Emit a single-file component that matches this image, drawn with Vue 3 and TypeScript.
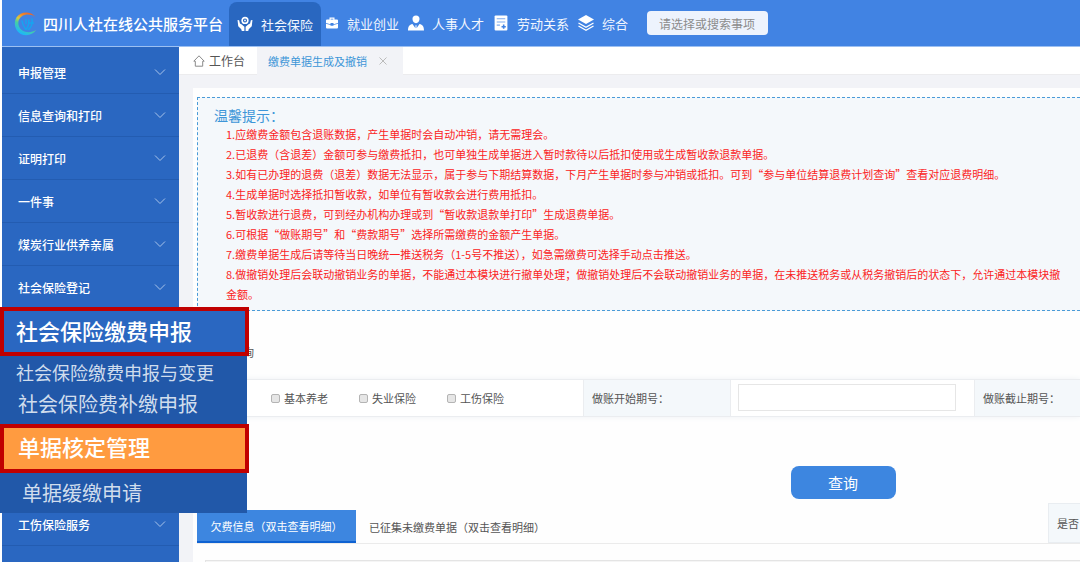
<script setup lang="ts">
import { ref } from 'vue'

interface NavItem {
  label: string
  icon: string
}

const navItems: NavItem[] = [
  { label: '社会保险', icon: 'hands' },
  { label: '就业创业', icon: 'case' },
  { label: '人事人才', icon: 'person' },
  { label: '劳动关系', icon: 'doc' },
  { label: '综合', icon: 'layers' },
]
const activeNav = ref('社会保险')

const menuTop: string[] = ['申报管理', '信息查询和打印', '证明打印', '一件事', '煤炭行业供养亲属', '社会保险登记']
const menuBottom: string[] = ['工伤保险服务']

const tips: string[] = [
  '1.应缴费金额包含退账数据，产生单据时会自动冲销，请无需理会。',
  '2.已退费（含退差）金额可参与缴费抵扣，也可单独生成单据进入暂时款待以后抵扣使用或生成暂收款退款单据。',
  '3.如有已办理的退费（退差）数据无法显示，属于参与下期结算数据，下月产生单据时参与冲销或抵扣。可到“参与单位结算退费计划查询”查看对应退费明细。',
  '4.生成单据时选择抵扣暂收款，如单位有暂收款会进行费用抵扣。',
  '5.暂收款进行退费，可到经办机构办理或到“暂收款退款单打印”生成退费单据。',
  '6.可根据“做账期号”和“费款期号”选择所需缴费的金额产生单据。',
  '7.缴费单据生成后请等待当日晚统一推送税务（1-5号不推送），如急需缴费可选择手动点击推送。',
  '8.做撤销处理后会联动撤销业务的单据，不能通过本模块进行撤单处理；做撤销处理后不会联动撤销业务的单据，在未推送税务或从税务撤销后的状态下，允许通过本模块撤',
  '金额。',
]

const insurances: string[] = ['基本养老', '失业保险', '工伤保险']
const checked = ref<string[]>([])
const startPeriod = ref('')
const keyword = ref('')

const resultTabs: string[] = ['欠费信息（双击查看明细）', '已征集未缴费单据（双击查看明细）']
const activeResult = ref(resultTabs[0])
</script>

<template>
  <div class="app">
    <header class="header">
      <a class="brand" href="#">
        <svg class="logo" viewBox="0 0 24 24" aria-hidden="true">
          <defs>
            <linearGradient id="ring" x1="0.9" y1="0.1" x2="0.45" y2="1">
              <stop offset="0" stop-color="#e8622c" />
              <stop offset="0.25" stop-color="#f08a28" />
              <stop offset="0.45" stop-color="#d8c840" />
              <stop offset="0.65" stop-color="#48cfa0" />
              <stop offset="1" stop-color="#1cb8f8" />
            </linearGradient>
          </defs>
          <path d="M21.500 5.200C16.500-.8 6.500-.4 2.600 5.800-.9 11.300 1 19.300 6.800 22.400 12 25 19 23.500 22 18.500 17.500 21.500 10.500 21.500 6.600 17.400 3 13.200 3.800 7.600 7.600 4.900 11.500 2.200 17 2.400 21.500 5.200Z" fill="url(#ring)" />
          <path d="M8 9.500C8.500 12.500 9.500 15 11.500 17.500M12 8V12M14.800 8.500C15 12 14.500 15 12 18M18 7.500C18.800 12 17.500 15.500 14.500 18M15.500 11.500H19.500" fill="none" stroke="#17a4f0" stroke-width="1.500" stroke-linecap="round" />
        </svg>
        <span>四川人社在线公共服务平台</span>
      </a>
      <nav class="nav">
        <button
          v-for="item in navItems"
          :key="item.label"
          type="button"
          class="nav-item"
          :class="{ active: item.label === activeNav }"
          @click="activeNav = item.label"
        >
          <svg v-if="item.icon === 'hands'" class="ico big" viewBox="0 0 18 18" aria-hidden="true">
            <circle cx="9" cy="5" r="3.200" fill="none" stroke="#fff" stroke-width="1.800" />
            <circle cx="9" cy="5" r="1" fill="#fff" />
            <path d="M.6 4.500 2.400 4.800 3.300 8.400 5 9.200 8.300 12V17H5.400L4.800 14.800 1.400 11.600ZM17.400 4.500 15.600 4.800 14.700 8.400 13 9.200 9.700 12V17H12.600L13.200 14.800 16.600 11.600Z" fill="#fff" />
          </svg>
          <svg v-else-if="item.icon === 'case'" class="ico small" viewBox="0 0 12 12" aria-hidden="true">
            <path d="M3.500 2.500V.5h5v2H11a1 1 0 0 1 1 1V6L7.500 7.200V6h-3v1.200L0 6V3.500a1 1 0 0 1 1-1ZM4.700 2.500h2.600v-.8H4.700ZM0 6.700l4.500 1.200v.8h3v-.8L12 6.700v3.800a1 1 0 0 1-1 1H1a1 1 0 0 1-1-1Z" fill="#fff" />
          </svg>
          <svg v-else-if="item.icon === 'person'" class="ico" viewBox="0 0 15 15" aria-hidden="true">
            <path d="M7.500.5a3.300 3.300 0 0 1 3.300 3.300c0 2-1.500 3.900-3.300 3.900S4.200 5.800 4.200 3.800A3.300 3.300 0 0 1 7.500.5ZM4.200 8.500 7 12.500V9.500h1v3l2.800-4C13.700 9.200 14.900 10.800 15 14.500H0C.1 10.800 1.300 9.200 4.200 8.500Z" fill="#fff" />
          </svg>
          <svg v-else-if="item.icon === 'doc'" class="ico" viewBox="0 0 15 15" aria-hidden="true">
            <rect x="1.500" y="0.500" width="12" height="14" rx="1" fill="#fff" />
            <path d="M3.500 3.500h8M3.500 6.500h8M3.500 9.500h3" stroke="#7fabed" stroke-width="1" />
            <path d="M10 9v4M8 11h4" stroke="#4183e3" stroke-width="1.500" />
          </svg>
          <svg v-else class="ico" viewBox="0 0 16 16" aria-hidden="true">
            <path d="M8 0 16 4.500 8 9 0 4.500Z" fill="#fff" />
            <path d="M.5 8 8 12.200 15.500 8M.5 11 8 15.200 15.500 11" fill="none" stroke="#fff" stroke-width="1.300" />
          </svg>
          <span>{{ item.label }}</span>
        </button>
      </nav>
      <input v-model="keyword" class="search" type="text" placeholder="请选择或搜索事项" aria-label="请选择或搜索事项" />
    </header>

    <div class="body">
      <aside class="sidebar">
        <button v-for="label in menuTop" :key="label" type="button" class="menu-row">
          <span>{{ label }}</span>
          <svg class="chev" viewBox="0 0 12 8" aria-hidden="true"><path d="M1 1.500 6 6.500 11 1.500" /></svg>
        </button>
        <div class="menu-open">
          <div class="flyout">
            <button type="button" class="fly-title">社会保险缴费申报</button>
            <a class="fly-link dense" href="#">社会保险缴费申报与变更</a>
            <a class="fly-link" href="#">社会保险费补缴申报</a>
            <a class="fly-title current" href="#">单据核定管理</a>
            <a class="fly-link last" href="#">单据缓缴申请</a>
          </div>
        </div>
        <button v-for="label in menuBottom" :key="label" type="button" class="menu-row">
          <span>{{ label }}</span>
          <svg class="chev" viewBox="0 0 12 8" aria-hidden="true"><path d="M1 1.500 6 6.500 11 1.500" /></svg>
        </button>
      </aside>

      <main class="main">
        <div class="page-tabs">
          <button type="button" class="page-tab home">
            <svg viewBox="0 0 12 12" aria-hidden="true"><path d="M.8 6.200 6 .8l5.200 5.400H9.700v5H2.300v-5Z" /></svg>
            <span>工作台</span>
          </button>
          <div class="page-tab open">
            <a href="#">缴费单据生成及撤销</a>
            <button type="button" class="close" aria-label="关闭">
              <svg viewBox="0 0 8 8" aria-hidden="true"><path d="M.5.5l7 7M7.500.5l-7 7" /></svg>
            </button>
          </div>
        </div>

        <div class="panel">
          <section class="tips">
            <h2>温馨提示：</h2>
            <p v-for="tip in tips" :key="tip">{{ tip }}</p>
          </section>

          <h3 class="section-title">查询</h3>

          <form class="filters" @submit.prevent>
            <div class="checks">
              <label v-for="name in insurances" :key="name">
                <input v-model="checked" type="checkbox" :value="name" />
                <span>{{ name }}</span>
              </label>
            </div>
            <label class="cell-label" for="start">做账开始期号：</label>
            <div class="cell-input"><input id="start" v-model="startPeriod" type="text" /></div>
            <div class="cell-label end">做账截止期号：</div>
          </form>

          <div class="actions"><button type="button" class="query">查询</button></div>

          <div class="results">
            <button
              v-for="tab in resultTabs"
              :key="tab"
              type="button"
              class="result-tab"
              :class="{ active: tab === activeResult }"
              @click="activeResult = tab"
            >{{ tab }}</button>
            <div class="flag">是否</div>
          </div>
          <div class="grid-top"></div>
        </div>
      </main>
    </div>
  </div>
</template>

<style>
body {
  margin: 0;
  background: #fff;
}
</style>

<style scoped>
.app {
  display: flex;
  flex-direction: column;
  height: 100vh;
  padding-left: 2px;
  box-sizing: border-box;
  overflow: hidden;
  font-family: "Noto Sans CJK SC", "Liberation Sans", sans-serif;
  font-size: 11px;
  color: #555;
}
.app * {
  box-sizing: border-box;
}
button,
input {
  font-family: inherit;
  margin: 0;
}
button {
  border: 0;
  padding: 0;
  background: none;
  color: inherit;
  cursor: pointer;
  white-space: nowrap;
}
a {
  color: inherit;
  text-decoration: none;
  white-space: nowrap;
}

.header {
  display: flex;
  flex: none;
  align-items: center;
  height: 47px;
  background: #4183e3;
  border-bottom: 1px solid #9cc0f2;
  color: #fff;
}
.brand {
  display: flex;
  align-items: center;
  gap: 5px;
  width: 227px;
  padding-left: 12px;
  font-size: 15px;
  font-weight: 500;
}
.logo {
  flex: none;
  width: 24px;
  height: 25px;
}
.nav {
  display: flex;
  align-self: stretch;
}
.nav-item {
  display: flex;
  align-items: center;
  gap: 8px;
  padding: 0 5px 0 4px;
  color: #f2f7ff;
  font-size: 13px;
}
.nav-item.active {
  margin-top: 2px;
  padding: 2px 8px;
  border-radius: 8px 8px 0 0;
  background: #2967c0;
}
.ico {
  width: 16px;
  height: 16px;
}
.ico.big {
  width: 16px;
  height: 18px;
}
.ico.small {
  width: 12px;
  height: 12px;
  margin: 0 1px;
}
.search {
  width: 121px;
  height: 24px;
  margin-left: 14px;
  padding: 0 12px;
  border: 0;
  border-radius: 4px;
  background: #edf3fd;
  color: #777;
  font-size: 12px;
}
.search::placeholder {
  color: #8c8c8c;
  opacity: 1;
}

.body {
  display: flex;
  flex: 1;
  min-height: 0;
}
.sidebar {
  position: relative;
  z-index: 2;
  flex: none;
  width: 177px;
  padding-top: 4px;
  background: #2a67c1;
  color: #fff;
}
.menu-row {
  display: flex;
  align-items: center;
  justify-content: space-between;
  width: 100%;
  height: 43px;
  padding: 0 13px 0 16px;
  border-bottom: 1px solid #235cb1;
  font-size: 12px;
  font-weight: 500;
}
.chev {
  width: 12px;
  height: 8px;
  fill: none;
  stroke: #a9c4ea;
  stroke-width: 1;
}
.menu-open {
  position: relative;
  height: 194px;
}
.flyout {
  position: absolute;
  top: -2px;
  left: -2px;
  display: flex;
  flex-direction: column;
  width: 247px;
  background: #2158a9;
}
.fly-title {
  width: 249px;
  height: 49px;
  padding: 0 0 4px 12px;
  border: 4px solid #c00000;
  background: #2a67c1;
  color: #fff;
  font-size: 22px;
  font-weight: 500;
  line-height: 36px;
  text-align: left;
}
.fly-title.current {
  padding-left: 14px;
  background: #ff9b40;
}
.fly-link {
  height: 36px;
  padding-left: 18px;
  color: #d0dded;
  font-size: 20px;
  line-height: 32px;
}
.fly-link.dense {
  height: 32px;
  padding-left: 16px;
  font-size: 18px;
}
.fly-link.last {
  height: 40px;
  padding-left: 22px;
  line-height: 40px;
}

.main {
  flex: 1;
  min-width: 0;
  background: #f2f3f7;
}
.page-tabs {
  display: flex;
  height: 28px;
  background: #fff;
  border-bottom: 1px solid #ececee;
}
.page-tab {
  display: flex;
  align-items: center;
}
.page-tab.home {
  gap: 4px;
  width: 78px;
  padding-left: 14px;
  font-size: 12px;
}
.page-tab.home svg {
  width: 12px;
  height: 12px;
  fill: none;
  stroke: #8a8a8a;
}
.page-tab.open {
  gap: 12px;
  height: 28px;
  padding: 0 16px 0 11px;
  background: #f2f3f7;
  color: #3d96d8;
}
.close {
  display: flex;
}
.close svg {
  width: 8px;
  height: 8px;
  fill: none;
  stroke: #bbb;
}

.panel {
  height: 100%;
  margin: 13px 0 0 14px;
  padding: 9px 0 0 4px;
  background: #fefefe;
}
.tips {
  padding: 8px 0 6px 16px;
  border: 1px dashed #4a9bd8;
  border-right: 0;
  background: #f4f8fb;
  overflow: hidden;
}
.tips h2 {
  margin: 0;
  color: #3d96d8;
  font-size: 14px;
  font-weight: 400;
  line-height: 18px;
}
.tips p {
  margin: 0;
  padding-left: 12px;
  color: #fb2323;
  line-height: 20px;
  white-space: nowrap;
}
.section-title {
  margin: 31px 0 17px 35px;
  font-size: 11px;
  font-weight: 400;
  line-height: 20px;
}
.filters {
  display: grid;
  grid-template-columns: 386fr 148fr 243fr 106fr;
  height: 38px;
  border-top: 1px solid #ebedf0;
  border-bottom: 1px solid #ebedf0;
  box-shadow: 0 0 6px #eef2f6;
}
.checks {
  display: flex;
  align-items: center;
  gap: 28px;
  padding-left: 74px;
  background: #fff;
}
.checks label {
  display: flex;
  align-items: center;
  gap: 4px;
  width: 60px;
  white-space: nowrap;
}
.checks input {
  appearance: none;
  flex: none;
  width: 9px;
  height: 9px;
  border: 1px solid #b4b4b4;
  border-radius: 2px;
  background: #e6e6e6;
}
.checks input:checked {
  background: #3d86e0;
}
.cell-label {
  display: flex;
  align-items: center;
  padding-left: 8px;
  border-left: 1px solid #ebedf0;
  border-right: 1px solid #ebedf0;
  background: #f4f8fb;
  white-space: nowrap;
}
.cell-label.end {
  border-right: 0;
}
.cell-input {
  padding: 4px 18px 5px 7px;
  background: #fff;
}
.cell-input input {
  width: 100%;
  height: 27px;
  padding: 0 6px;
  border: 1px solid #e6e6e6;
  background: #fff;
}
.actions {
  display: flex;
  padding: 49px 0 4px 67%;
}
.query {
  width: 105px;
  height: 33px;
  margin-left: 2px;
  border-radius: 8px;
  background: #3d86e0;
  color: #fff;
  font-size: 15px;
}
.results {
  display: flex;
  align-items: flex-end;
  border-bottom: 1px solid #ebebeb;
}
.result-tab {
  height: 33px;
  padding: 0 13px;
  font-size: 11px;
}
.result-tab.active {
  width: 159px;
  background: #3d86e0;
  border-bottom: 2px solid #0f62d2;
  color: #fff;
}
.flag {
  width: 32px;
  height: 40px;
  margin-left: auto;
  padding-left: 8px;
  border: 1px solid #e9edf1;
  border-right: 0;
  background: #f4f8fb;
  line-height: 38px;
  overflow: hidden;
  white-space: nowrap;
}
.grid-top {
  height: 40px;
  margin: 16px 0 0 8px;
  border: 1px solid #e4e4e4;
  border-right: 0;
  background: #f5f5f5;
}
</style>
